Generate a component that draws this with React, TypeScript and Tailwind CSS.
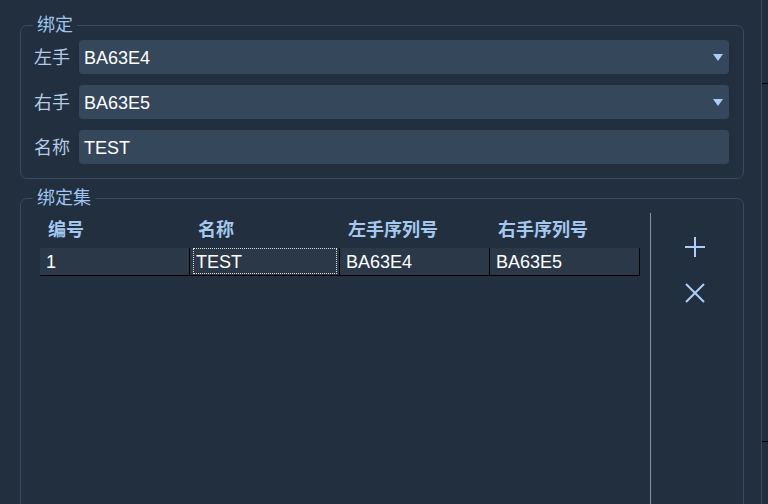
import React from "react";

const font = { fontFamily: '"Liberation Sans", "Noto Sans CJK SC", sans-serif' };

function Arrow() {
  return (
    <svg width="10" height="7" viewBox="0 0 10 7" className="shrink-0">
      <polygon points="0,0 10,0 5,7" fill="#a9cdf5" />
    </svg>
  );
}

function Row({ label, value, select }: { label: string; value: string; select?: boolean }) {
  return (
    <div className="flex items-center h-[34px]">
      <div className="w-[45px] text-[18px] leading-[20px] pt-[2px] text-[#b4cbe6]">{label}</div>
      <div className="flex-1 h-[34px] rounded-[4px] bg-[#35475b] flex items-center pl-[5px] pr-[6px]">
        <span className="flex-1 text-[18px] leading-[20px] pt-[2px] text-white">{value}</span>
        {select && <Arrow />}
      </div>
    </div>
  );
}

const headers = ["编号", "名称", "左手序列号", "右手序列号"];
const cells = ["1", "TEST", "BA63E4", "BA63E5"];

export default function App() {
  return (
    <div
      className="w-[768px] h-[504px] bg-[#212f3e] overflow-hidden flex relative"
      style={font}
    >
      <div className="w-[744px] pl-[20px] shrink-0">
        <fieldset className="mt-[15px] w-[724px] border border-[#3a4a5c] rounded-[7px]">
          <legend className="ml-[12px] px-[4px] text-[18px] leading-[20px] text-[#9fc4ee]">绑定</legend>
          <div className="pt-[5px] pl-[13px] pr-[14px] pb-[14px] flex flex-col gap-[11px]">
            <Row label="左手" value="BA63E4" select />
            <Row label="右手" value="BA63E5" select />
            <Row label="名称" value="TEST" />
          </div>
        </fieldset>
        <fieldset className="mt-[9px] w-[724px] h-[400px] border border-[#3a4a5c] rounded-[7px]">
          <legend className="ml-[12px] px-[4px] text-[18px] leading-[20px] text-[#9fc4ee]">绑定集</legend>
          <div className="flex h-full pl-[19px]">
            <div className="w-[600px] pt-[9px]">
              <div className="flex h-[26px] items-center">
                {headers.map((h) => (
                  <div key={h} className="w-[150px] pl-[8px] text-[18px] leading-[20px] font-bold text-[#a6c8ee]">
                    {h}
                  </div>
                ))}
              </div>
              <div className="mt-[5px] flex border-b border-black">
                {cells.map((c, i) => (
                  <div
                    key={i}
                    className="w-[150px] h-[27px] bg-[#2b3848] border-r border-black relative flex items-center pl-[6px]"
                  >
                    {i === 1 && (
                      <div className="absolute left-[3px] right-[2px] top-0 bottom-[1px] border border-dotted border-[#dcdcdc]" />
                    )}
                    <span className="text-[18px] leading-[20px] pt-[1px] text-white">{c}</span>
                  </div>
                ))}
              </div>
            </div>
            <div className="ml-[10px] mt-[5px] w-px bg-[#8b949e]" />
            <div className="flex-1 flex flex-col items-center pt-[28px] pr-[4px]">
              <svg width="22" height="22" viewBox="0 0 22 22">
                <path d="M11 1V21M1 11H21" stroke="#a9d1f7" strokeWidth="2" />
              </svg>
              <svg width="20" height="20" viewBox="0 0 20 20" className="mt-[25px]">
                <path d="M1 1L19 19M19 1L1 19" stroke="#a9d1f7" strokeWidth="2" />
              </svg>
            </div>
          </div>
        </fieldset>
      </div>
      <div className="w-[17px] shrink-0" />
      <div className="w-[1px] bg-[#3a4858] shrink-0" />
      <div className="flex-1 relative">
        <div className="absolute left-0 top-[83px] w-[6px] h-px bg-black" />
        <div className="absolute left-0 top-[441px] w-[6px] h-px bg-black" />
      </div>
    </div>
  );
}
